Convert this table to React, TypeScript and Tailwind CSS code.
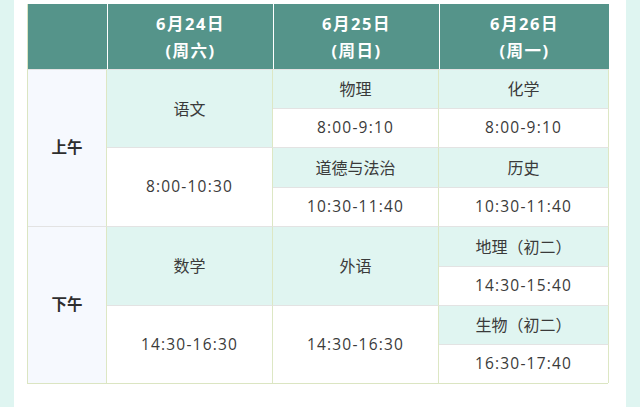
const font = { fontFamily: '"Open Sans", "Noto Sans CJK SC", sans-serif' };

type Cell = { text: string; col: string; row: string; tone: "mint" | "white" | "label" };

const cells: Cell[] = [
  { text: "上午", col: "col-start-1", row: "row-start-2 row-span-4", tone: "label" },
  { text: "语文", col: "col-start-2", row: "row-start-2 row-span-2", tone: "mint" },
  { text: "8:00-10:30", col: "col-start-2", row: "row-start-4 row-span-2", tone: "white" },
  { text: "物理", col: "col-start-3", row: "row-start-2", tone: "mint" },
  { text: "8:00-9:10", col: "col-start-3", row: "row-start-3", tone: "white" },
  { text: "道德与法治", col: "col-start-3", row: "row-start-4", tone: "mint" },
  { text: "10:30-11:40", col: "col-start-3", row: "row-start-5", tone: "white" },
  { text: "化学", col: "col-start-4", row: "row-start-2", tone: "mint" },
  { text: "8:00-9:10", col: "col-start-4", row: "row-start-3", tone: "white" },
  { text: "历史", col: "col-start-4", row: "row-start-4", tone: "mint" },
  { text: "10:30-11:40", col: "col-start-4", row: "row-start-5", tone: "white" },
  { text: "下午", col: "col-start-1", row: "row-start-6 row-span-4", tone: "label" },
  { text: "数学", col: "col-start-2", row: "row-start-6 row-span-2", tone: "mint" },
  { text: "14:30-16:30", col: "col-start-2", row: "row-start-8 row-span-2", tone: "white" },
  { text: "外语", col: "col-start-3", row: "row-start-6 row-span-2", tone: "mint" },
  { text: "14:30-16:30", col: "col-start-3", row: "row-start-8 row-span-2", tone: "white" },
  { text: "地理（初二）", col: "col-start-4", row: "row-start-6", tone: "mint" },
  { text: "14:30-15:40", col: "col-start-4", row: "row-start-7", tone: "white" },
  { text: "生物（初二）", col: "col-start-4", row: "row-start-8", tone: "mint" },
  { text: "16:30-17:40", col: "col-start-4", row: "row-start-9", tone: "white" },
];

const tones = {
  mint: "bg-[#e0f5f1] text-[#3a3a3a] text-[16px]",
  white: "bg-white text-[#3a3a3a] text-[15.5px] tracking-[1.2px]",
  label: "bg-[#f6f9fe] text-[#2e2e2e] text-[15.5px] font-bold",
};

const days = [
  { date: "6月24日", week: "(周六)" },
  { date: "6月25日", week: "(周日)" },
  { date: "6月26日", week: "(周一)" },
];

export default function App() {
  return (
    <div className="w-[640px] h-[407px] bg-[#dff5f1] flex px-[14px] overflow-hidden" style={font}>
      <div className="flex-1 bg-white pl-[13px] pt-[4px]">
        <div className="grid w-[581px] grid-cols-[79px_166px_166px_170px] grid-rows-[65px_39px_39px_40px_39px_40px_39px_39px_39px] border-l border-b border-[#dbe5c2]">
          {/* header */}
          <div className="col-start-1 row-start-1 bg-[#55948a]" />
          {days.map((d, i) => (
            <div
              key={d.date}
              className={`row-start-1 bg-[#55948a] text-white font-bold text-[16.5px] tracking-[1.5px] leading-[27px] flex flex-col items-center justify-center border-l border-white ${
                i === 0 ? "col-start-2" : i === 1 ? "col-start-3" : "col-start-4"
              }`}
            >
              <span>{d.date}</span>
              <span>{d.week}</span>
            </div>
          ))}

          {cells.map((c, i) => (
            <div
              key={i}
              className={`${c.col} ${c.row} ${tones[c.tone]} flex items-center justify-center border-r border-r-[#dde7c4] border-t border-t-[#e3e3e3]`}
            >
              {c.text}
            </div>
          ))}
        </div>
      </div>
    </div>
  );
}
